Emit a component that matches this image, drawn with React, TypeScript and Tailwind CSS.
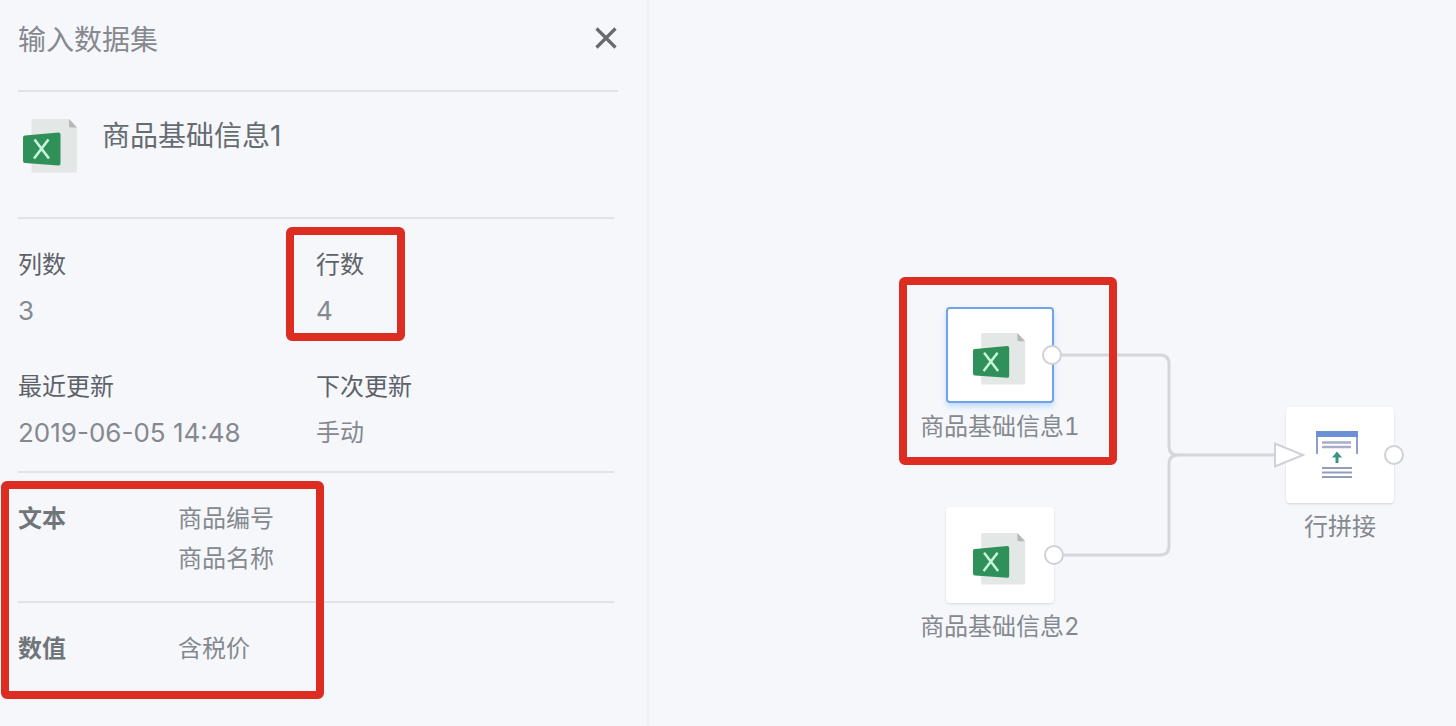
import type { ReactNode } from 'react';

function ExcelIcon({ className }: { className: string }) {
  return (
    <svg viewBox="0 0 56 56" className={className} aria-hidden="true">
      <path d="M10 1h36l8 8v44a1.500 1.500 0 0 1-1.500 1.500H10A1.500 1.500 0 0 1 8.500 53V2.500A1.500 1.500 0 0 1 10 1z" fill="#e3e7e6" />
      <path d="M46 1l8 8.500h-6.500A1.500 1.500 0 0 1 46 8z" fill="#b6b9bc" />
      <path d="M2 17.500L35.500 14.500a2 2 0 0 1 2 2v29a2 2 0 0 1-2 2L2 45a2 2 0 0 1-2-2V19.500a2 2 0 0 1 2-2z" fill="#2f9159" />
      <path d="M11.500 21.500L26 40.500M25.500 21.500L11 40.500" fill="none" stroke="#c9f5da" strokeWidth="2.600" />
    </svg>
  );
}

function UnionIcon() {
  return (
    <svg viewBox="0 0 44 50" className="mr-1.5 h-[50px] w-11" aria-hidden="true">
      <path d="M2 6v18M42 6v18" stroke="#8f9fce" strokeWidth="2" />
      <rect x="1" y="1" width="42" height="6" fill="#6d8fd6" />
      <path d="M7 12.500h29M7 17h29" stroke="#a6acc9" strokeWidth="2.400" />
      <path d="M22 21.500l5 6h-3.500v5.500h-3v-5.500H17z" fill="#3a9484" />
      <path d="M7 38h30M7 42.500h30M7 47h30" stroke="#929db9" strokeWidth="2.200" />
    </svg>
  );
}

type FieldProps = { label: string; children: ReactNode; numeric?: boolean; marked?: boolean };

function Field({ label, children, numeric, marked }: FieldProps) {
  return (
    <div className="relative text-2xl leading-[46px]">
      <dt className="text-[#5d6268]">{label}</dt>
      <dd className={numeric ? 'text-[26px] leading-[46px] text-[#85898f]' : 'text-[#85898f]'}>{children}</dd>
      {marked && (
        <div className="pointer-events-none absolute -top-[15px] -bottom-[7px] -left-[30px] w-[119px] rounded-md border-8 border-[#dd2c22]" />
      )}
    </div>
  );
}

function Node({ label, place, frame, children }: { label: string; place: string; frame: string; children: ReactNode }) {
  return (
    <figure className={`absolute flex w-[180px] flex-col items-center ${place}`}>
      <div className={`flex h-24 w-[108px] items-center justify-center rounded bg-white ${frame}`}>{children}</div>
      <figcaption className="mt-1 text-2xl leading-[40px] text-[#85898f] tabular-nums">{label}</figcaption>
    </figure>
  );
}

export default function App() {
  return (
    <div className="flex min-h-screen bg-[#f5f7fb] font-['Inter','Noto_Sans_CJK_SC',sans-serif]">
      <aside className="w-[calc(44.5%-2px)] shrink-0 pl-[18px]">
        <header className="mr-7 flex items-center justify-between border-b-2 border-[#e1e3e7] pt-5 pb-[30px]">
          <h1 className="text-[28px] leading-[40px] text-[#85898f]">输入数据集</h1>
          <button type="button" aria-label="关闭" className="-mt-1 text-[#666b70]">
            <svg viewBox="0 0 24 24" className="size-6" aria-hidden="true">
              <path d="M2.500 2.500l19 19M21.500 2.500l-19 19" stroke="currentColor" strokeWidth="3.200" />
            </svg>
          </button>
        </header>

        <div className="mr-8">
          <section className="flex items-start border-b-2 border-[#e1e3e7] pt-6 pb-[43px]">
            <ExcelIcon className="mt-0.5 ml-[5px] size-14" />
            <h2 className="ml-[23px] text-[28px] leading-[40px] text-[#666b70]">商品基础信息1</h2>
          </section>

          <dl className="grid grid-cols-2 gap-y-[30px] border-b-2 border-[#e1e3e7] pt-[23px] pb-[15px]">
            <Field label="列数" numeric>3</Field>
            <Field label="行数" numeric marked>4</Field>
            <Field label="最近更新" numeric>2019-06-05 14:48</Field>
            <Field label="下次更新">手动</Field>
          </dl>

          <dl className="relative text-2xl leading-[40px] text-[#85898f]">
            <div className="flex border-b-2 border-[#e1e3e7] pt-[26px] pb-[22px]">
              <dt className="w-40 font-bold text-[#70757a]">文本</dt>
              <dd>
                <ul>
                  <li>商品编号</li>
                  <li>商品名称</li>
                </ul>
              </dd>
            </div>
            <div className="flex pt-[26px] pb-[22px]">
              <dt className="w-40 font-bold text-[#70757a]">数值</dt>
              <dd>含税价</dd>
            </div>
            <div className="pointer-events-none absolute top-2 -bottom-2 -left-[17px] w-[323px] rounded-md border-8 border-[#dd2c22]" />
          </dl>
        </div>
      </aside>

      <main className="relative min-w-0 flex-1 overflow-hidden border-l-4 border-[#f0f2f6]">
        <Node label="商品基础信息1" place="top-[307px] left-[260px]" frame="border-2 border-[#6fa3ea] shadow-md shadow-blue-200">
          <ExcelIcon className="mt-2 size-[54px]" />
        </Node>
        <Node label="商品基础信息2" place="top-[507px] left-[260px]" frame="shadow-sm">
          <ExcelIcon className="mt-2 size-[54px]" />
        </Node>
        <Node label="行拼接" place="top-[407px] left-[600px]" frame="shadow-sm">
          <UnionIcon />
        </Node>
        <svg width="806" height="726" viewBox="2 0 806 726" className="pointer-events-none absolute top-0 left-0" aria-hidden="true">
          <g fill="none" stroke="#d5d6db" strokeWidth="3">
            <path d="M414 355H512Q521 355 521 364V446Q521 455 530 455H627" />
            <path d="M416 555H512Q521 555 521 546V464Q521 455 530 455" />
          </g>
          <g fill="#fff" stroke="#cfd0d8" strokeWidth="2">
            <circle cx="404" cy="355" r="9" />
            <circle cx="406" cy="555" r="9" />
            <circle cx="746" cy="455" r="9" />
            <path d="M627 443.500V466.500L655 455z" />
          </g>
        </svg>
        <div className="pointer-events-none absolute top-[277px] left-[249px] h-[188px] w-[218px] rounded-md border-8 border-[#dd2c22]" />
      </main>
    </div>
  );
}
